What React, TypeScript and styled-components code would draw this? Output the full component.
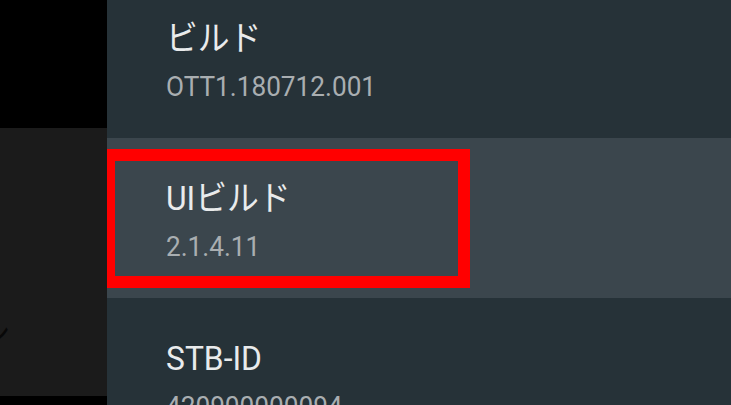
import React from "react";
import styled, { createGlobalStyle } from "styled-components";

type Item = { title: string; value: string };

const items: Item[] = [
  { title: "ビルド", value: "OTT1.180712.001" },
  { title: "UIビルド", value: "2.1.4.11" },
  { title: "STB-ID", value: "420900000094" },
];

const App = () => {
  return (
    <>
      <GlobalStyle />
      <Screen>
        <SideColumn>
          <SideTop />
          <SidePanel>
            <SideLabel>ン</SideLabel>
          </SidePanel>
        </SideColumn>
        <SettingsPanel>
          <SettingsList>
            {items.map((item, i) => (
              <Row key={item.title} $focused={i === 1}>
                <TextBlock>
                  <Title>{item.title}</Title>
                  <Value>{item.value}</Value>
                </TextBlock>
                {i === 1 && <Highlight />}
              </Row>
            ))}
          </SettingsList>
        </SettingsPanel>
      </Screen>
    </>
  );
};

export default App;

const GlobalStyle = createGlobalStyle`
  html, body {
    margin: 0;
    padding: 0;
    background: #000;
  }
  body {
    font-family: Roboto, "Noto Sans CJK JP", sans-serif;
  }
`;

const Screen = styled.div`
  width: 731px;
  height: 405px;
  display: flex;
  overflow: hidden;
  background: #000;
`;

const SideColumn = styled.div`
  width: 107px;
  flex-shrink: 0;
  display: flex;
  flex-direction: column;
`;

const SideTop = styled.div`
  height: 128px;
  background: #000;
`;

const SidePanel = styled.div`
  height: 268px;
  background: #1b1b1b;
  overflow: hidden;
  display: flex;
  flex-direction: column;
`;

const SideLabel = styled.div`
  margin-top: 186px;
  margin-left: -20px;
  font-size: 30px;
  line-height: 34px;
  color: #080808;
  font-family: "Noto Sans CJK JP", sans-serif;
`;

const SettingsPanel = styled.div`
  flex: 1;
  background: #263238;
  overflow: hidden;
`;

const SettingsList = styled.div`
  margin-top: -22px;
  display: flex;
  flex-direction: column;
`;

const Row = styled.div<{ $focused: boolean }>`
  position: relative;
  height: 160px;
  flex-shrink: 0;
  background: ${(p) => (p.$focused ? "#3b464d" : "transparent")};
  padding-left: 59px;
  box-sizing: border-box;
`;

const TextBlock = styled.div`
  padding-top: 40px;
  transform: scaleX(0.935);
  transform-origin: left top;
`;

const Title = styled.div`
  font-size: 34px;
  line-height: 40px;
  color: #e9ebec;
  white-space: nowrap;
`;

const Value = styled.div`
  margin-top: 13px;
  font-size: 28px;
  line-height: 32px;
  color: #a9aeb1;
  white-space: nowrap;
`;

const Highlight = styled.div`
  position: absolute;
  left: -4px;
  top: 11px;
  width: 367px;
  height: 139px;
  border: 12px solid #ff0000;
  box-sizing: border-box;
`;
